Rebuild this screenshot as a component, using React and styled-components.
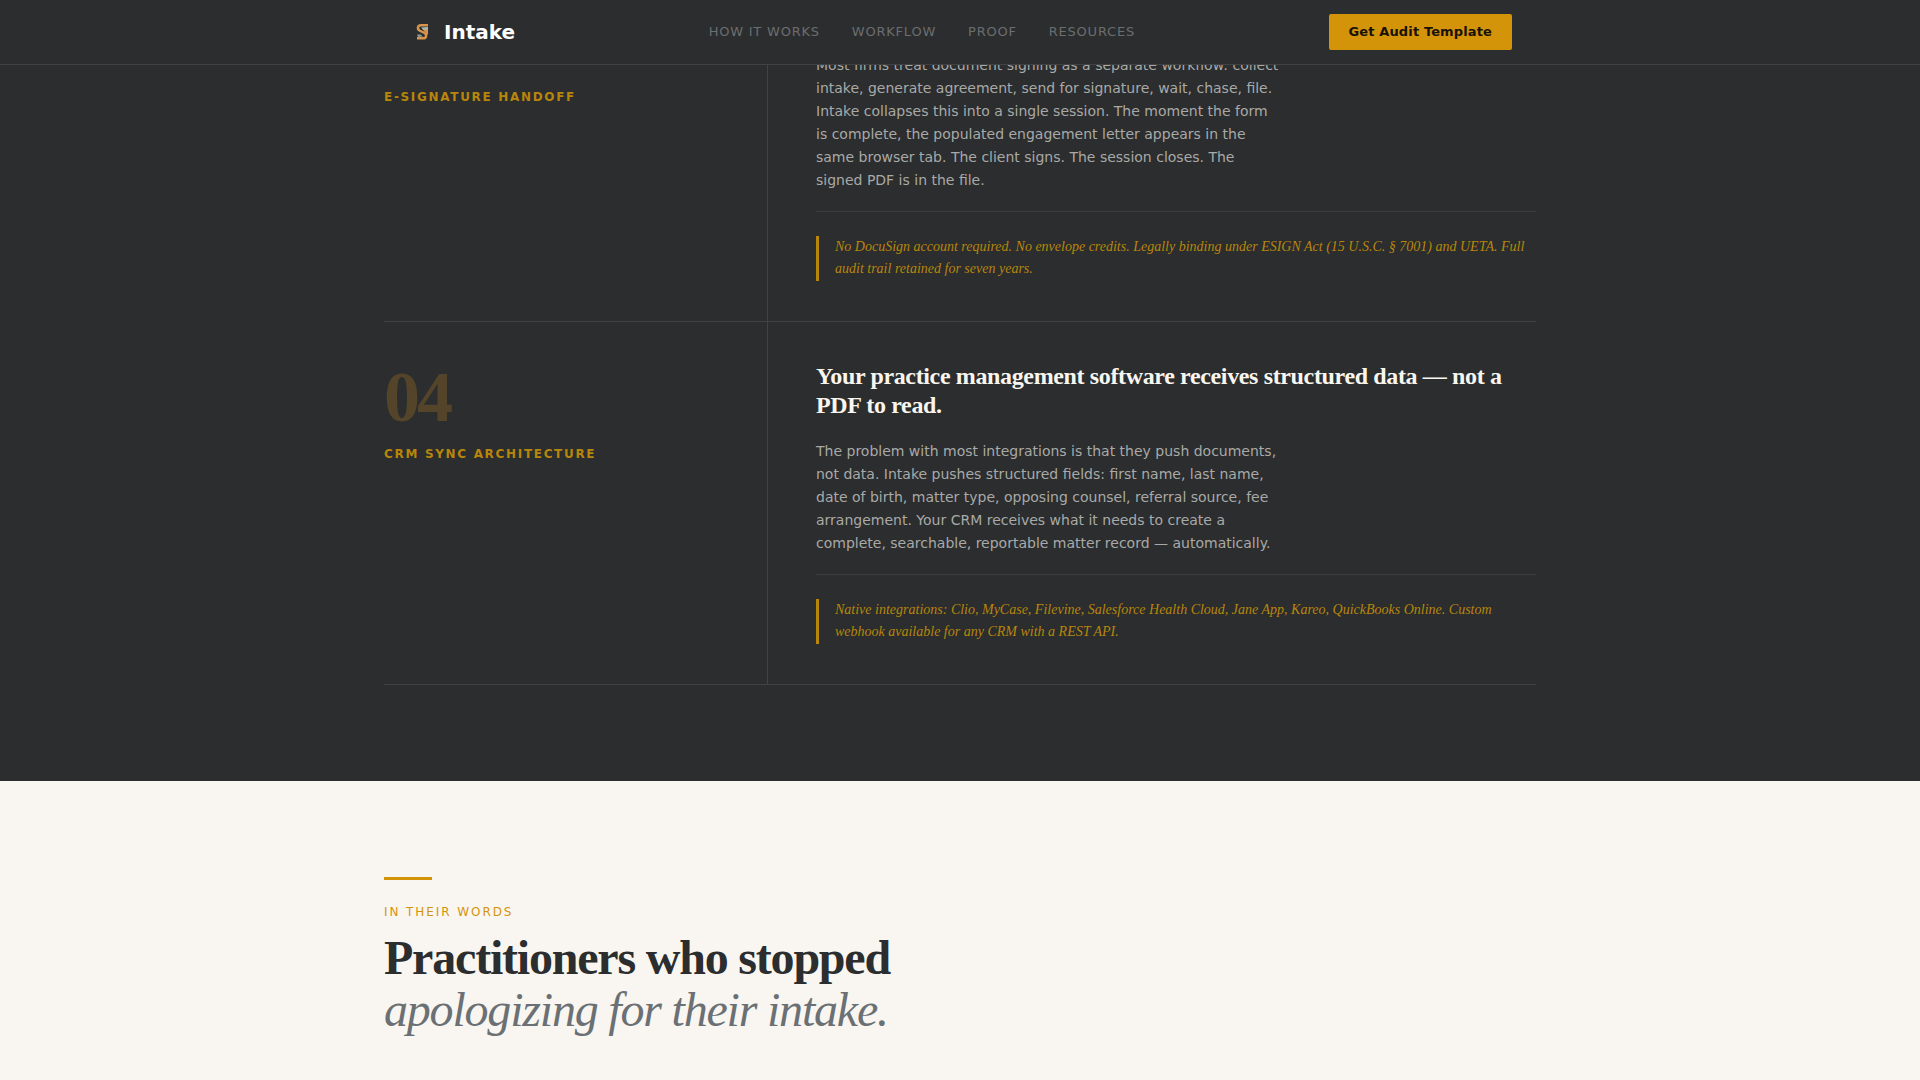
import React from 'react'
import styled, { createGlobalStyle, ThemeProvider } from 'styled-components'

const theme = {
    sans: '"DejaVu Sans", sans-serif',
    serif: '"Liberation Serif", serif',
    colors: {
        ink: '#2b2d2e',
        paper: '#f9f6f1',
        white: '#f9f6f0',
        amber: '#d4940a',
        amberDim: '#b8860b',
        amberFaint: '#54452a',
        body: '#a9a9a8',
        muted: '#6b6e70',
        slate: '#6b7074',
        line: '#404243',
        lineSoft: '#3b3d3e',
    },
}

const GlobalStyle = createGlobalStyle`
    *, *::before, *::after {
        box-sizing: border-box;
    }
    body {
        margin: 0;
        background: #f9f6f1;
        font-family: "DejaVu Sans", sans-serif;
    }
    h2, h3, p, blockquote {
        margin: 0;
    }
`

const Page = styled.div`
    overflow: hidden;
    min-height: 100vh;
`

const Header = styled.header`
    position: fixed;
    top: 0;
    left: 0;
    right: 0;
    z-index: 10;
    background: ${props => props.theme.colors.ink};
    border-bottom: 1px solid ${props => props.theme.colors.line};
`

const HeaderInner = styled.div`
    display: flex;
    align-items: center;
    justify-content: space-between;
    max-width: 1152px;
    height: 64px;
    margin: 0 auto;
    padding: 0 24px;
`

const Brand = styled.a`
    display: flex;
    align-items: center;
    gap: 8px;
    color: #fff;
    font-size: 20px;
    font-weight: 700;
    line-height: 28px;
    text-decoration: none;
`

const Nav = styled.nav`
    display: flex;
    gap: 32px;
`

const NavLink = styled.a`
    color: ${props => props.theme.colors.muted};
    font-size: 13px;
    line-height: 20px;
    letter-spacing: 0.06em;
    text-transform: uppercase;
    text-decoration: none;
`

const Cta = styled.button`
    height: 36px;
    padding: 0 20px 2px;
    border: none;
    border-radius: 2px;
    background: ${props => props.theme.colors.amber};
    color: #1a1208;
    font-family: ${props => props.theme.sans};
    font-size: 13px;
    font-weight: 700;
    letter-spacing: 0.01em;
    cursor: pointer;
`

const Container = styled.div`
    max-width: 1152px;
    margin: 0 auto;
`

const Features = styled.section`
    margin-top: -35px;
    padding-bottom: 96px;
    background: ${props => props.theme.colors.ink};
`

const FeatureRow = styled.article`
    display: grid;
    grid-template-columns: 1fr 2fr;
    border-bottom: 1px solid ${props => props.theme.colors.line};
`

const FeatureAside = styled.div`
    padding: 40px 48px 40px 0;
    border-right: 1px solid ${props => props.theme.colors.line};
`

const FeatureMain = styled.div`
    padding: 40px 0 40px 48px;
`

const Numeral = styled.div`
    margin-bottom: 14px;
    color: ${props => props.theme.colors.amberFaint};
    font-family: ${props => props.theme.serif};
    font-size: 72px;
    font-weight: 700;
    line-height: 70px;
    letter-spacing: -0.04em;
`

const FeatureLabel = styled.div`
    color: ${props => props.theme.colors.amberDim};
    font-size: 12px;
    font-weight: 700;
    line-height: 16px;
    letter-spacing: 0.14em;
    text-transform: uppercase;
`

const FeatureTitle = styled.h3`
    min-height: 29px;
    margin-bottom: 20px;
    color: ${props => props.theme.colors.white};
    font-family: ${props => props.theme.serif};
    font-size: 24px;
    font-weight: 700;
    line-height: 29px;
    letter-spacing: -0.015em;
`

const FeatureText = styled.p`
    max-width: 464px;
    margin-bottom: 19px;
    color: ${props => props.theme.colors.body};
    font-size: 14px;
    line-height: 23px;
`

const NoteWrap = styled.div`
    padding-top: 24px;
    border-top: 1px solid ${props => props.theme.colors.lineSoft};
`

const Note = styled.blockquote`
    min-height: 45px;
    padding-left: 16px;
    border-left: 3px solid ${props => props.theme.colors.amberDim};
    color: ${props => props.theme.colors.amberDim};
    font-family: ${props => props.theme.serif};
    font-size: 14px;
    font-style: italic;
    line-height: 22px;
`

const Quotes = styled.section`
    padding: 96px 0;
    background: ${props => props.theme.colors.paper};
`

const Rule = styled.div`
    width: 48px;
    height: 3px;
    margin-bottom: 24px;
    background: ${props => props.theme.colors.amber};
`

const Eyebrow = styled.p`
    margin-bottom: 12px;
    color: ${props => props.theme.colors.amber};
    font-size: 12px;
    line-height: 16px;
    letter-spacing: 0.16em;
    text-transform: uppercase;
`

const Heading = styled.h2`
    color: ${props => props.theme.colors.ink};
    font-family: ${props => props.theme.serif};
    font-size: 48px;
    font-weight: 700;
    line-height: 52px;
    letter-spacing: -0.025em;

    em {
        display: block;
        color: ${props => props.theme.colors.slate};
        font-weight: 400;
    }
`

const links = ['How it works', 'Workflow', 'Proof', 'Resources']

const features = [
    {
        number: '03',
        label: 'E-Signature Handoff',
        title: '',
        text: 'Most firms treat document signing as a separate workflow: collect intake, generate agreement, send for signature, wait, chase, file. Intake collapses this into a single session. The moment the form is complete, the populated engagement letter appears in the same browser tab. The client signs. The session closes. The signed PDF is in the file.',
        note: 'No DocuSign account required. No envelope credits. Legally binding under ESIGN Act (15 U.S.C. § 7001) and UETA. Full audit trail retained for seven years.',
    },
    {
        number: '04',
        label: 'CRM Sync Architecture',
        title: 'Your practice management software receives structured data — not a PDF to read.',
        text: 'The problem with most integrations is that they push documents, not data. Intake pushes structured fields: first name, last name, date of birth, matter type, opposing counsel, referral source, fee arrangement. Your CRM receives what it needs to create a complete, searchable, reportable matter record — automatically.',
        note: 'Native integrations: Clio, MyCase, Filevine, Salesforce Health Cloud, Jane App, Kareo, QuickBooks Online. Custom webhook available for any CRM with a REST API.',
    },
]

const Logo = () => (
    <svg width="28" height="28" viewBox="0 0 28 28" fill="none" aria-hidden="true">
        <path d="M13 9.500 20 9v3l-3 2z" fill="#a8bab4" />
        <path d="M9 16.500h3.500l2.500 2-5 .5z" fill="#8f9a94" />
        <path
            d="M20 7.250h-7c-3.500 0-4 3.750-1.500 5.250l5 2.500c2.500 1.500 2 5.250-1 5.250H9"
            stroke="#d8944e"
            strokeWidth="2.500"
        />
        <path d="M16 12.500h3v4" stroke="#d8944e" strokeWidth="2" />
    </svg>
)

const Feature = ({ number, label, title, text, note }) => (
    <FeatureRow>
        <FeatureAside>
            <Numeral>{number}</Numeral>
            <FeatureLabel>{label}</FeatureLabel>
        </FeatureAside>
        <FeatureMain>
            <FeatureTitle>{title}</FeatureTitle>
            <FeatureText>{text}</FeatureText>
            <NoteWrap>
                <Note>{note}</Note>
            </NoteWrap>
        </FeatureMain>
    </FeatureRow>
)

const App = () => (
    <ThemeProvider theme={theme}>
        <GlobalStyle />
        <Page>
            <Header>
                <HeaderInner>
                    <Brand href="#">
                        <Logo />
                        Intake
                    </Brand>
                    <Nav>
                        {links.map(link => (
                            <NavLink key={link} href="#">{link}</NavLink>
                        ))}
                    </Nav>
                    <Cta type="button">Get Audit Template</Cta>
                </HeaderInner>
            </Header>
            <Features>
                <Container>
                    {features.map(feature => (
                        <Feature key={feature.number} {...feature} />
                    ))}
                </Container>
            </Features>
            <Quotes>
                <Container>
                    <Rule />
                    <Eyebrow>In their words</Eyebrow>
                    <Heading>
                        Practitioners who stopped
                        <em>apologizing for their intake.</em>
                    </Heading>
                </Container>
            </Quotes>
        </Page>
    </ThemeProvider>
)

export default App
